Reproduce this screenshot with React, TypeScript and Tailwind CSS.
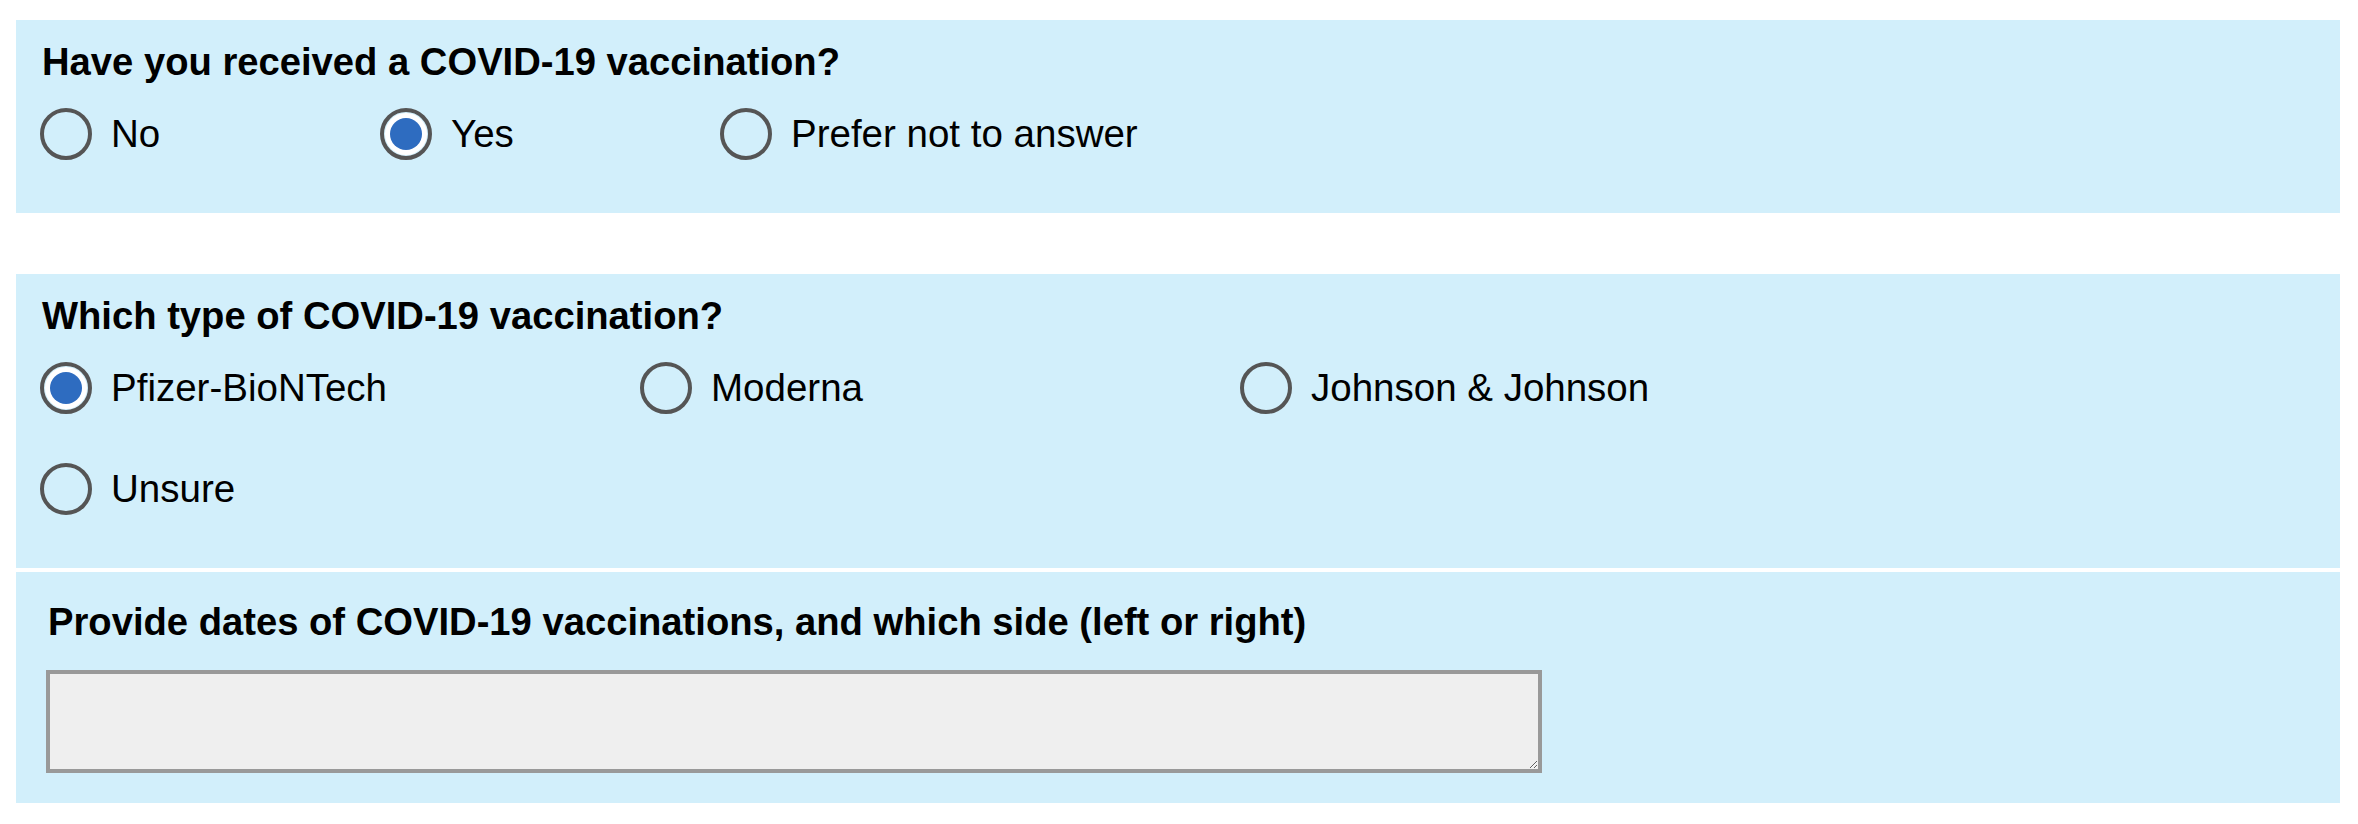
import React from 'react';

type Option = { label: string; checked?: boolean };

function Radio({ checked }: { checked?: boolean }) {
  return (
    <span className="w-[52px] h-[52px] shrink-0 rounded-full border-[4px] border-[#555555] flex items-center justify-center bg-transparent">
      {checked && (
        <span className="w-[42px] h-[42px] rounded-full bg-white flex items-center justify-center">
          <span className="w-[32px] h-[32px] rounded-full bg-[#2e6cc0]" />
        </span>
      )}
    </span>
  );
}

function RadioGroup({ options, colWidth }: { options: Option[]; colWidth: string }) {
  return (
    <div className="flex flex-wrap gap-y-[49px]">
      {options.map((opt) => (
        <label key={opt.label} className={`${colWidth} flex items-center gap-[19px] h-[52px]`}>
          <Radio checked={opt.checked} />
          <span className="text-[38.5px] leading-none text-black whitespace-nowrap">{opt.label}</span>
        </label>
      ))}
    </div>
  );
}

export default function App() {
  return (
    <div
      className="w-[2358px] h-[824px] bg-white pt-[20px] pl-[16px] pr-[18px]"
      style={{ fontFamily: '"Liberation Sans", Arial, sans-serif' }}
    >
      {/* Question 1 */}
      <section className="bg-[#d2effb] h-[193px] pt-[20px] pl-[24px]">
        <h2 className="text-[38.2px] font-bold leading-[44px] text-black pl-[2px] mb-[24px]">
          Have you received a COVID-19 vaccination?
        </h2>
        <RadioGroup
          colWidth="w-[340px]"
          options={[{ label: 'No' }, { label: 'Yes', checked: true }, { label: 'Prefer not to answer' }]}
        />
      </section>

      {/* Question 2 */}
      <section className="bg-[#d2effb] h-[294px] mt-[61px] pt-[20px] pl-[24px]">
        <h2 className="text-[38.2px] font-bold leading-[44px] text-black pl-[2px] mb-[24px]">
          Which type of COVID-19 vaccination?
        </h2>
        <RadioGroup
          colWidth="w-[600px]"
          options={[
            { label: 'Pfizer-BioNTech', checked: true },
            { label: 'Moderna' },
            { label: 'Johnson & Johnson' },
            { label: 'Unsure' },
          ]}
        />
      </section>

      {/* Question 3 */}
      <section className="bg-[#d2effb] h-[231px] mt-[4px] pt-[28px] pl-[30px]">
        <h2 className="text-[38.2px] font-bold leading-[44px] text-black pl-[2px] mb-[26px]">
          Provide dates of COVID-19 vaccinations, and which side (left or right)
        </h2>
        <textarea className="block w-[1496px] h-[103px] border-[4px] border-[#999999] bg-[#efefef] outline-none" />
      </section>
    </div>
  );
}
